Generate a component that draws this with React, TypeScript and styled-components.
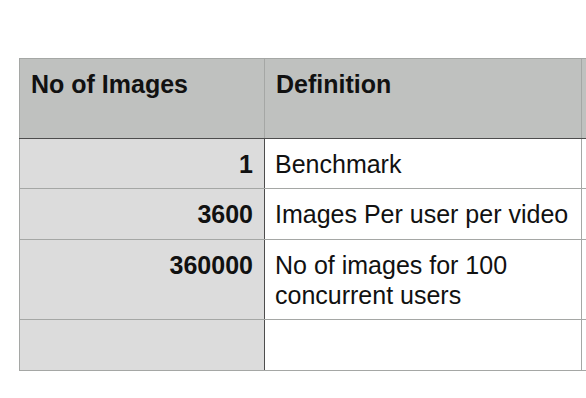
import styled, { createGlobalStyle } from "styled-components";

const GlobalStyle = createGlobalStyle`
  html, body {
    margin: 0;
    padding: 0;
    background: #ffffff;
    overflow: hidden;
  }
  body {
    font-family: "Liberation Sans", Arial, Helvetica, sans-serif;
    color: #111111;
  }
`;

const Page = styled.div`
  width: 586px;
  height: 398px;
  overflow: hidden;
  padding: 58px 0 0 19px;
  box-sizing: border-box;
`;

const Sheet = styled.table`
  border-collapse: collapse;
  table-layout: fixed;
  width: 700px;
  font-size: 25px;
  line-height: 30px;
`;

const HeadCell = styled.th`
  height: 80px;
  box-sizing: border-box;
  padding: 10px 11px 10px 11px;
  background: #bfc1bf;
  border: 1px solid #a5a7a5;
  border-bottom: 1px solid #4d4d4d;
  text-align: left;
  vertical-align: top;
  font-weight: 700;
`;

const Row = styled.tr<{ $h: number }>`
  height: ${(props) => props.$h}px;
`;

const NumberCell = styled.td`
  padding: 10px 11px 0 11px;
  background: #dcdcdc;
  border: 1px solid #a5a7a5;
  border-right: 1px solid #4d4d4d;
  text-align: right;
  vertical-align: top;
  font-weight: 700;
`;

const TextCell = styled.td`
  padding: 10px 11px 0 10px;
  background: #ffffff;
  border: 1px solid #a5a7a5;
  text-align: left;
  vertical-align: top;
`;

interface IRow {
  count: string;
  definition: string;
  height: number;
}

const rows: IRow[] = [
  { count: "1", definition: "Benchmark", height: 50 },
  { count: "3600", definition: "Images Per user per video", height: 51 },
  {
    count: "360000",
    definition: "No of images for 100 concurrent users",
    height: 80,
  },
  { count: "", definition: "", height: 51 },
];

function App() {
  return (
    <>
      <GlobalStyle />
      <Page>
        <Sheet>
          <colgroup>
            <col style={{ width: 245 }} />
            <col style={{ width: 317 }} />
            <col style={{ width: 138 }} />
          </colgroup>
          <thead>
            <tr>
              <HeadCell>No of Images</HeadCell>
              <HeadCell>Definition</HeadCell>
              <HeadCell></HeadCell>
            </tr>
          </thead>
          <tbody>
            {rows.map((row, i) => (
              <Row key={i} $h={row.height}>
                <NumberCell>{row.count}</NumberCell>
                <TextCell>{row.definition}</TextCell>
                <TextCell></TextCell>
              </Row>
            ))}
          </tbody>
        </Sheet>
      </Page>
    </>
  );
}

export default App;
